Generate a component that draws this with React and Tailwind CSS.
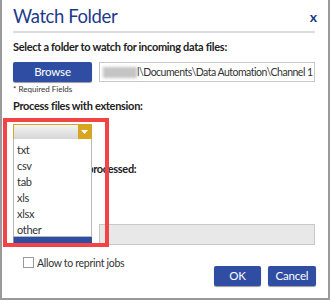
export default function App() {
  const font = { fontFamily: 'Lato, "Noto Sans", sans-serif' };
  const items = ["txt", "csv", "tab", "xls", "xlsx", "other"];
  return (
    <div className="w-[330px] h-[300px] bg-white border-l-2 border-r-2 border-b-2 border-[#9a9a9a] relative overflow-hidden text-[#222]" style={font}>
      <div className="pl-[11px] pr-[11px]">
        {/* Header */}
        <div className="flex items-end justify-between h-[30px] pr-0">
          <div className="text-[18.5px] leading-[24px] text-[#1e3a8a] mb-[2px] tracking-[-0.4px]">Watch Folder</div>
          <div className="text-[14px] leading-[16px] font-bold text-[#1e3a8a] mb-[5px]">x</div>
        </div>
        <div className="h-[2px] bg-[#dcdcdc] mr-[2px] mt-[1px]" />
        <div className="mt-[6px] text-[11px] leading-[16px] font-bold tracking-[-0.3px]">Select a folder to watch for incoming data files:</div>
        <div className="flex gap-[7px] mt-[7px] h-[20px]">
          <div className="w-[79px] h-[20px] bg-[#2f4ea3] rounded-[2px] shadow-[0_1px_1px_rgba(0,0,0,0.4)] text-white text-[11.5px] tracking-[-0.2px] leading-[20px] text-center">Browse</div>
          <div className="flex-1 h-[20px] border border-[#c8c8c8] bg-white flex items-center overflow-hidden pl-[3px] mr-[2px]">
            <div className="w-[34px] h-[11px] bg-[#c4c4c4] blur-[1.5px] shrink-0" />
            <div className="text-[10.5px] leading-[16px] whitespace-nowrap text-[#333] tracking-[-0.5px]">l\Documents\Data Automation\Channel 1</div>
          </div>
        </div>
        <div className="text-[8px] leading-[10px] mt-[2px] text-[#333]">* Required Fields</div>
        <div className="mt-[4px] text-[11px] leading-[16px] font-bold tracking-[-0.3px]">Process files with extension:</div>
        <div className="mt-[10px] flex w-[79px] h-[16px] border border-[#d9a521]">
          <div className="flex-1 bg-gradient-to-b from-[#f4f4f4] to-[#d6d6d6]" />
          <div className="w-[13px] bg-[#d9a521] flex items-center justify-center">
            <svg width="7" height="4" viewBox="0 0 7 4"><path d="M0 0 L7 0 L3.5 4 Z" fill="#fff" /></svg>
          </div>
        </div>
        <div className="mt-[21px] text-[11px] leading-[16px] font-bold tracking-[-0.3px]">Move files after processed:</div>
        <div className="flex gap-[7px] mt-[47px] h-[21px]">
          <div className="w-[79px] h-[21px] bg-[#2f4ea3] rounded-[2px] border-l border-[#888]" />
          <div className="flex-1 h-[21px] border border-[#c8c8c8] bg-[#e8e8e8] mr-[2px]" />
        </div>
        <div className="flex items-center mt-[12px] ml-[10px] h-[11px]">
          <div className="w-[11px] h-[11px] border border-[#9a9a9a] bg-white" />
          <div className="ml-[3px] text-[10.5px] leading-[14px] text-[#333] tracking-[-0.3px]">Allow to reprint jobs</div>
        </div>
        <div className="flex justify-end gap-[7px] mr-[1px] -mt-[2px]">
          <div className="w-[47px] h-[20px] bg-[#2f4ea3] rounded-[2px] shadow-[0_1px_1px_rgba(0,0,0,0.4)] text-white text-[11.5px] tracking-[-0.2px] leading-[20px] text-center">OK</div>
          <div className="w-[48px] h-[20px] bg-[#2f4ea3] rounded-[2px] shadow-[0_1px_1px_rgba(0,0,0,0.4)] text-white text-[11.5px] tracking-[-0.2px] leading-[20px] text-center">Cancel</div>
        </div>
      </div>

      {/* Dropdown list */}
      <div className="absolute left-[11px] top-[139px] w-[79px] h-[98px] bg-white border border-[#b8b8b8] border-t-0 pt-[3px]">
        {items.map((t) => (
          <div key={t} className="pl-[3px] text-[11px] tracking-[-0.3px] h-[16px] leading-[16px] text-[#333]">{t}</div>
        ))}
      </div>
      {/* Red highlight */}
      <div className="absolute left-[1px] top-[118px] w-[106px] h-[129px] border-4 border-[#f24444]" />
    </div>
  );
}
